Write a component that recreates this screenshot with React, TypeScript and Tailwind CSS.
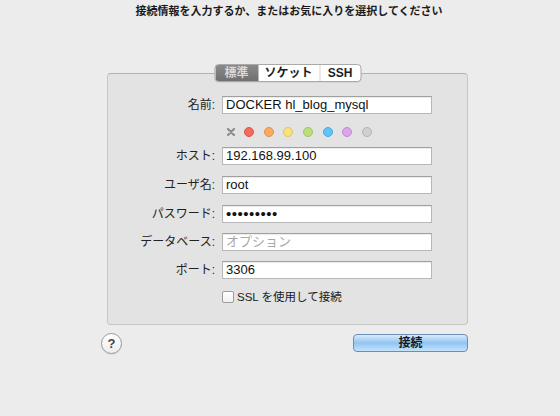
import React from "react";

const CJK = "font-['Lucida_Grande','Liberation_Sans','Noto_Sans_CJK_JP',sans-serif]";

const COLORS = [
  { bg: "bg-[#f46b5e]", border: "border-[#d9564a]" },
  { bg: "bg-[#fbaa63]", border: "border-[#e09148]" },
  { bg: "bg-[#f8e27e]", border: "border-[#dcc35f]" },
  { bg: "bg-[#b7e07d]", border: "border-[#9cc564]" },
  { bg: "bg-[#62c3f8]", border: "border-[#47a6dc]" },
  { bg: "bg-[#dba4ec]", border: "border-[#c089d2]" },
  { bg: "bg-[#d0d0d0]", border: "border-[#b2b2b2]" },
];

function Field({ label, value, placeholder, className = "", top }: { label: string; value?: string; placeholder?: string; className?: string; top: string }) {
  return (
    <div className={`flex h-[18px] items-center ${top}`}>
      <div className="w-[108px] pr-[1px] text-right text-[12px] leading-[18px] text-[#222]">{label}</div>
      <div className="ml-[6px] flex h-[18px] w-[210px] items-center border border-[#b7b7b7] border-t-[#a0a0a0] bg-white px-[3px] shadow-[inset_0_1px_1px_rgba(0,0,0,0.08)]">
        {value ? (
          <span className={`text-[13px] leading-[16px] text-[#111] ${className}`}>{value}</span>
        ) : (
          <span className="text-[13px] leading-[16px] text-[#a8a8a8]">{placeholder}</span>
        )}
      </div>
    </div>
  );
}

export default function App() {
  return (
    <div className={`h-[416px] w-[560px] overflow-hidden bg-[#ececec] ${CJK}`}>
      {/* Title */}
      <div className="flex justify-center pl-[18px] pt-[3px]">
        <p className="text-[11px] font-bold leading-[16px] text-[#1a1a1a]">接続情報を入力するか、またはお気に入りを選択してください</p>
      </div>

      {/* Panel */}
      <div className="relative ml-[107px] mt-[54px] h-[252px] w-[361px] rounded-[4px] border border-[#c6c6c6] border-t-[#b2b2b2] bg-[#e3e3e3] pt-[22px]">
        <div className="absolute left-1/2 top-[-10px] flex h-[18px] -translate-x-1/2 overflow-hidden rounded-[4px] border border-[#a9a9a9] bg-white text-[12px] font-semibold leading-[16px] shadow-[0_1px_0_rgba(0,0,0,0.06)]">
          <div className="flex w-[43px] items-center justify-center bg-gradient-to-b from-[#8a8a8a] to-[#707070] text-[#d9d9d9]">標準</div>
          <div className="flex w-[62px] items-center justify-center border-r border-[#d4d4d4] text-[#1e1e1e]">ソケット</div>
          <div className="flex w-[40px] items-center justify-center text-[#1e1e1e]">SSH</div>
        </div>

        <Field label="名前:" value="DOCKER hl_blog_mysql" className="text-[13.5px]" top="" />

        {/* Colour labels */}
        <div className="mt-[13px] flex h-[10px] items-center pl-[118px]">
          <svg width="10" height="10" viewBox="0 0 10 10" className="mr-[8px]">
            <path d="M2 2 L8 8 M8 2 L2 8" stroke="#8c8c8c" strokeWidth="2.2" strokeLinecap="round" />
          </svg>
          <div className="flex gap-[9.7px]">
            {COLORS.map((c, i) => (
              <span key={i} className={`block h-[10px] w-[10px] rounded-full border ${c.bg} ${c.border}`} />
            ))}
          </div>
        </div>

        <Field label="ホスト:" value="192.168.99.100" top="mt-[10px]" />
        <Field label="ユーザ名:" value="root" top="mt-[11px]" />
        <Field label="パスワード:" value="•••••••••" className="text-[15px] tracking-[0.5px]" top="mt-[11px]" />
        <Field label="データベース:" placeholder="オプション" top="mt-[10px]" />
        <Field label="ポート:" value="3306" top="mt-[10px]" />

        <div className="mt-[11px] flex items-center pl-[114px]">
          <span className="block h-[12px] w-[12px] rounded-[2px] border border-[#9d9d9d] bg-gradient-to-b from-white to-[#f0f0f0]" />
          <span className="ml-[3px] text-[11.5px] leading-[14px] text-[#1a1a1a]">SSL を使用して接続</span>
        </div>
      </div>

      {/* Bottom buttons */}
      <div className="ml-[101px] mt-[8px] flex w-[367px] items-start justify-between">
        <button type="button" className="flex h-[21px] w-[21px] items-center justify-center rounded-full border border-[#9a9a9a] bg-gradient-to-b from-white to-[#ededed] text-[13px] font-semibold leading-none text-[#444] shadow-[0_1px_0_rgba(0,0,0,0.08)]">
          ?
        </button>
        <button type="button" className="mt-[1px] flex h-[18px] w-[115px] items-center justify-center rounded-[4px] border border-[#6b8db7] bg-gradient-to-b from-[#d8ebfc] via-[#92c4f1] to-[#c4e3fb] text-[12px] font-bold leading-none text-[#1a1a1a]">
          接続
        </button>
      </div>
    </div>
  );
}
